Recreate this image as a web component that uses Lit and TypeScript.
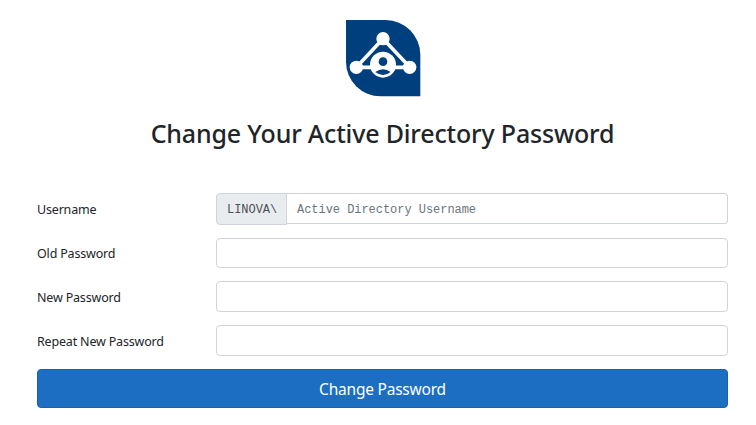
import { LitElement, html, css } from "lit";
import { customElement } from "lit/decorators.js";

@customElement("app-root")
export class AppRoot extends LitElement {
  static styles = css`
    :host {
      display: block;
      height: 425px;
      box-sizing: border-box;
      padding: 19px 28px 0 37px;
      overflow: hidden;
      background: #fff;
      color: #212529;
      font-family: "Segoe UI", "Noto Sans", sans-serif;
      font-size: 13px;
    }
    .logo {
      display: block;
      width: 76px;
      height: 78px;
      margin-left: 308px;
    }
    h1 {
      margin: 17px 0 0;
      height: 38px;
      font-size: 25px;
      line-height: 38px;
      font-weight: 500;
      letter-spacing: -0.17px;
      text-align: center;
      white-space: nowrap;
    }
    form {
      margin-top: 41px;
      display: grid;
      grid-template-columns: 179px 1fr;
      grid-template-rows: 45px 43px 44px 44px 39px;
    }
    label {
      line-height: 34px;
      font-size: 12.5px;
      letter-spacing: -0.18px;
      white-space: nowrap;
    }
    label[for="old"] {
      line-height: 32px;
    }
    .group {
      display: flex;
      align-items: flex-start;
    }
    .addon {
      box-sizing: border-box;
      flex: none;
      width: 71px;
      height: 32px;
      padding-left: 10px;
      border: 1px solid #ced4da;
      border-radius: 4px 0 0 4px;
      background: #e9ecef;
      color: #495057;
      font: 12px/32px "Liberation Mono", monospace;
      letter-spacing: -0.04px;
    }
    input {
      box-sizing: border-box;
      width: 100%;
      min-width: 0;
      height: 31px;
      margin: 0;
      padding: 2px 10px 0;
      border: 1px solid #ced4da;
      border-radius: 4px;
      background: #fff;
      font: 12px "Liberation Mono", monospace;
      letter-spacing: -0.04px;
      outline: none;
    }
    .short {
      height: 30px;
    }
    .joined {
      border-left: 0;
      border-radius: 0 4px 4px 0;
    }
    input::placeholder {
      color: #6c757d;
      opacity: 1;
    }
    button {
      grid-column: 1 / -1;
      height: 39px;
      padding: 1px 0 0;
      border: 1px solid #1862ab;
      border-radius: 4px;
      background: #1b6ec2;
      color: #fff;
      font: 15.5px "Segoe UI", "Noto Sans", sans-serif;
      letter-spacing: -0.22px;
    }
  `;

  render() {
    return html`
      <svg class="logo" viewBox="30 27 228 234" aria-hidden="true">
        <path fill="#003f7d" d="M33 30H152A104 104 0 0 1 256 134V259H137A104 104 0 0 1 33 155Z" />
        <path fill="none" stroke="#fff" stroke-width="11" d="M144 86L64 172H225Z" />
        <g fill="#fff">
          <circle cx="144" cy="86" r="20" />
          <circle cx="64" cy="172" r="20" />
          <circle cx="224" cy="172" r="20" />
          <circle cx="144" cy="164" r="39" />
        </g>
        <circle cx="144" cy="155" r="13" fill="#003f7d" />
        <path fill="#003f7d" d="M121 186Q144 170 167 186Q144 204 121 186Z" />
      </svg>
      <h1>Change Your Active Directory Password</h1>
      <form @submit=${(e: Event) => e.preventDefault()}>
        <label for="user">Username</label>
        <div class="group">
          <span class="addon">LINOVA\\</span>
          <input id="user" class="joined" placeholder="Active Directory Username" />
        </div>
        <label for="old">Old Password</label>
        <input id="old" class="short" type="password" />
        <label for="new">New Password</label>
        <input id="new" type="password" />
        <label for="repeat">Repeat New Password</label>
        <input id="repeat" type="password" />
        <button>Change Password</button>
      </form>
    `;
  }
}
